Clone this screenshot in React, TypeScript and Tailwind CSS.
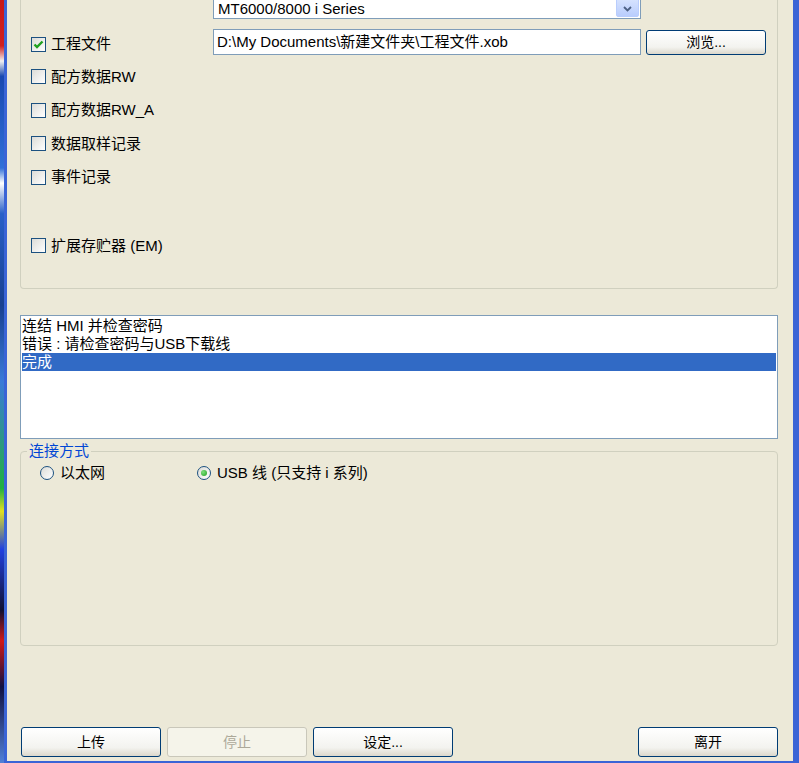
import React from "react";

const font = "font-[family-name:'Liberation_Sans','Noto_Sans_CJK_SC',sans-serif]";

function CheckBox({ label, checked }: { label: string; checked?: boolean }) {
  return (
    <div className="flex items-center">
      <span className="flex h-[15px] w-[15px] items-center justify-center border border-[#1c5180] bg-[linear-gradient(135deg,#dcdcd7,#ffffff)]">
        {checked && (
          <svg width="11" height="11" viewBox="0 0 11 11">
            <polyline points="1.5,5.5 4,8 9.5,2.5" fill="none" stroke="#21a121" strokeWidth="2.4" />
          </svg>
        )}
      </span>
      <span className="ml-[5px] text-[15px] leading-[18px] text-black">{label}</span>
    </div>
  );
}

function Radio({ label, checked }: { label: string; checked?: boolean }) {
  return (
    <div className="flex items-center">
      <span className="flex h-[14px] w-[14px] items-center justify-center rounded-full border border-[#1c5180] bg-[linear-gradient(135deg,#dcdcd7,#ffffff)]">
        {checked && (
          <span className="h-[6px] w-[6px] rounded-full bg-[radial-gradient(circle_at_35%_35%,#7be07b,#21a121)]" />
        )}
      </span>
      <span className="ml-[6px] text-[15px] leading-[18px] text-black">{label}</span>
    </div>
  );
}

function XpButton({ label, disabled, className = "" }: { label: string; disabled?: boolean; className?: string }) {
  return (
    <button
      className={
        disabled
          ? `flex h-[30px] w-[140px] items-center justify-center rounded-[3px] border border-[#c9c7ba] bg-[#f5f4ea] text-[14px] text-[#aca899] ${className}`
          : `flex h-[30px] w-[140px] items-center justify-center rounded-[3px] border border-[#003c74] bg-[linear-gradient(to_bottom,#ffffff,#f3f3ef_70%,#dcd8cc)] text-[14px] text-black ${className}`
      }
    >
      {label}
    </button>
  );
}

const logLines = ["连结 HMI 并检查密码", "错误 : 请检查密码与USB下载线", "完成"];

export default function App() {
  return (
    <div className={`flex h-[763px] w-[799px] overflow-hidden ${font}`}>
      {/* desktop peeking through on the left */}
      <div className="w-[4px] bg-[linear-gradient(to_bottom,#c81818_0%,#d02020_6%,#f0f0f0_8%,#1848b0_10%,#3070d8_22%,#ffffff_24%,#2860c8_28%,#184090_40%,#3a7ad8_50%,#20b040_64%,#e0e020_67%,#2040e0_72%,#101030_80%,#d01818_84%,#101040_90%,#5080d8_100%)]" />
      <div className="w-[3px] bg-[#3a64d6]" />

      <div className="flex flex-1 flex-col">
        <div className="flex flex-1 flex-col bg-[#ece9d8] pb-[4px] pl-[13px] pr-[15px]">
          {/* upper group */}
          <div className="h-[289px] rounded-b-[4px] border-x border-b border-[#d0d0bf] pl-[10px]">
            <div className="flex">
              <div className="w-[182px]" />
              <div className="-mt-[7px] flex h-[26px] w-[428px] items-center border border-[#7f9db9] bg-white p-[1px]">
                <span className="mt-[5px] flex-1 pl-[3px] text-[15px] leading-[18px] text-black">MT6000/8000 i Series</span>
                <span className="flex h-full w-[23px] items-center justify-center rounded-[2px] border border-[#b9cdfd] bg-[linear-gradient(to_bottom,#dce7ff,#b9cdfd)] pt-[5px]">
                  <svg width="9" height="6" viewBox="0 0 9 6">
                    <polyline points="1,1 4.5,4.5 8,1" fill="none" stroke="#4d6185" strokeWidth="1.8" />
                  </svg>
                </span>
              </div>
            </div>

            <div className="mt-[10px] flex items-center">
              <div className="mt-[4px] w-[182px]">
                <CheckBox label="工程文件" checked />
              </div>
              <div className="flex h-[26px] w-[428px] items-center border border-[#7f9db9] bg-white pl-[3px] text-[15px] text-black">
                D:\My Documents\新建文件夹\工程文件.xob
              </div>
              <XpButton label="浏览..." className="ml-[5px] !h-[25px] !w-[120px]" />
            </div>

            <div className="mt-[5px] flex h-[33.5px] items-center">
              <CheckBox label="配方数据RW" />
            </div>
            <div className="flex h-[33.5px] items-center">
              <CheckBox label="配方数据RW_A" />
            </div>
            <div className="flex h-[33.5px] items-center">
              <CheckBox label="数据取样记录" />
            </div>
            <div className="flex h-[33.5px] items-center">
              <CheckBox label="事件记录" />
            </div>
            <div className="mt-[35px] flex h-[33.5px] items-center">
              <CheckBox label="扩展存贮器 (EM)" />
            </div>
          </div>

          {/* log list */}
          <div className="mt-[26px] h-[124px] border border-[#7f9db9] bg-white p-[1px]">
            {logLines.map((line, i) => (
              <div
                key={line}
                className={
                  i === logLines.length - 1
                    ? "h-[18px] bg-[#316ac5] text-[15px] leading-[18px] text-white"
                    : "h-[18px] text-[15px] leading-[18px] text-black"
                }
              >
                {line}
              </div>
            ))}
          </div>

          {/* connection group */}
          <fieldset className="mt-[4px] h-[203px] rounded-[4px] border border-[#d0d0bf]">
            <legend className="ml-[6px] px-[2px] text-[15px] leading-[16px] text-[#0046d5]">连接方式</legend>
            <div className="flex h-[28px] items-center pl-[19px]">
              <div className="w-[157px]">
                <Radio label="以太网" />
              </div>
              <Radio label="USB 线 (只支持 i 系列)" checked />
            </div>
          </fieldset>

          {/* buttons */}
          <div className="mt-auto flex gap-[6px] pl-[1px]">
            <XpButton label="上传" />
            <XpButton label="停止" disabled />
            <XpButton label="设定..." />
            <XpButton label="离开" className="ml-auto" />
          </div>
        </div>
        <div className="h-[2px] bg-[#3a64d6]" />
      </div>

      <div className="w-[6px] bg-[#3a64d6]" />
    </div>
  );
}
